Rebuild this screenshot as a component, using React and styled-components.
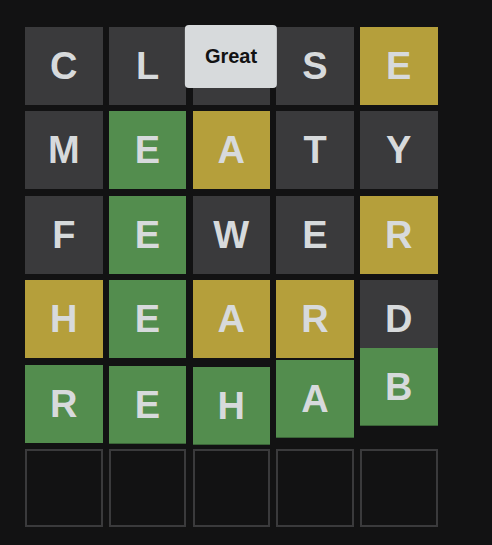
import React from 'react';
import styled, { createGlobalStyle } from 'styled-components';

const GlobalStyle = createGlobalStyle`
    html, body {
        margin: 0;
        padding: 0;
        background: #121213;
    }
    body {
        font-family: "Liberation Sans", Arial, sans-serif;
    }
`;

// 색상 표
const COLORS = {
    absent: '#3a3a3c',
    correct: '#538d4e',
    present: '#b59f3b',
};

const Page = styled.div`
    width: 492px;
    height: 545px;
    padding: 27px 0 0 25px;
    box-sizing: border-box;
    background: #121213;
`;

const Board = styled.div`
    position: relative;
    display: grid;
    grid-template-columns: repeat(5, 77.5px);
    grid-template-rows: repeat(6, 78px);
    column-gap: 6.25px;
    row-gap: 6.4px;
    width: 412px;
`;

const Tile = styled.div`
    display: flex;
    align-items: center;
    justify-content: center;
    box-sizing: border-box;
    background: ${p => (p.$state ? COLORS[p.$state] : 'transparent')};
    border: ${p => (p.$state ? 'none' : '2px solid #3a3a3c')};
    box-shadow: ${p => (p.$shift ? 'inset 0 -1px 0 rgba(0,0,0,0.28)' : 'none')};
    transform: translateY(${p => p.$shift || 0}px);
    color: #d7dadc;
    font-size: 38px;
    font-weight: bold;
    text-transform: uppercase;
    line-height: 1;
`;

const Toast = styled.div`
    position: absolute;
    top: -2px;
    left: 50%;
    transform: translateX(-50%);
    z-index: 2;
    padding: 20px;
    border-radius: 4px;
    background: #d7dadc;
    color: #121213;
    font-size: 20px;
    line-height: 23px;
    font-weight: bold;
    white-space: nowrap;
`;

const rows = [
    { word: 'close', states: ['absent', 'absent', 'absent', 'absent', 'present'] },
    { word: 'meaty', states: ['absent', 'correct', 'present', 'absent', 'absent'] },
    { word: 'fewer', states: ['absent', 'correct', 'absent', 'absent', 'present'] },
    { word: 'heard', states: ['present', 'correct', 'present', 'present', 'absent'] },
    { word: 'rehab', states: ['correct', 'correct', 'correct', 'correct', 'correct'], shifts: [0, 1, 2, -5, -17] },
    { word: '', states: [] },
];

const App = () => (
    <Page>
        <GlobalStyle />
        <Board>
            {rows.map((row, r) =>
                [0, 1, 2, 3, 4].map(c => (
                    <Tile
                        key={r + '-' + c}
                        $state={row.states[c]}
                        $shift={row.shifts ? row.shifts[c] : 0}
                    >
                        {row.word[c] || ''}
                    </Tile>
                ))
            )}
            <Toast>Great</Toast>
        </Board>
    </Page>
);

export default App;
